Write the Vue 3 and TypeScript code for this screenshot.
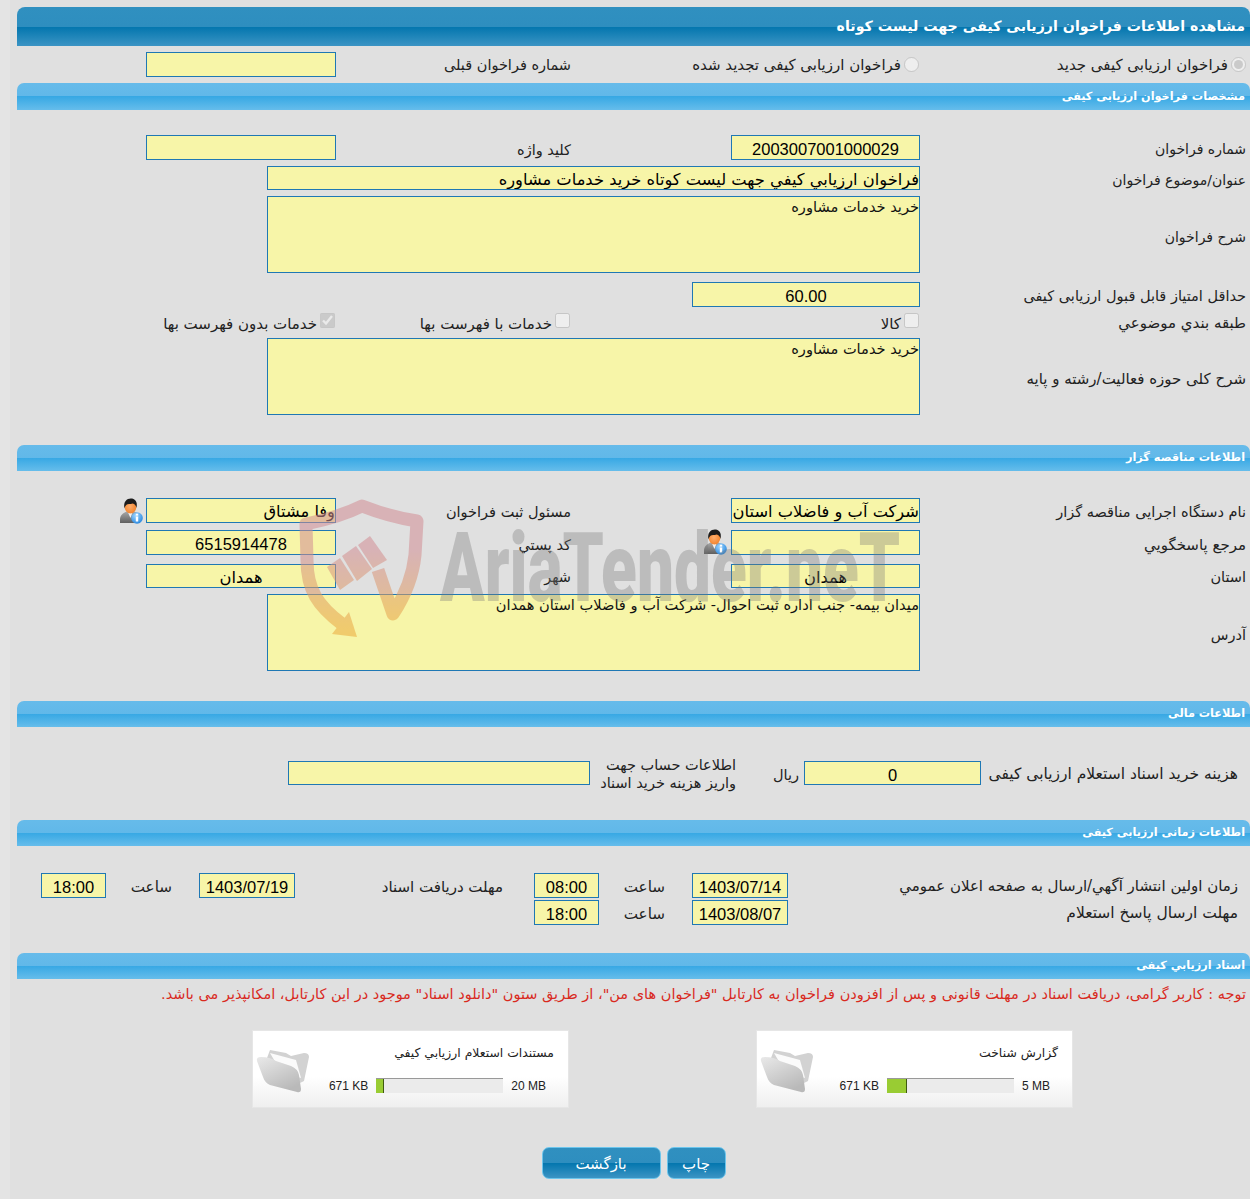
<script setup lang="ts">
interface DocCard { title: string; used: string; total: string; percent: number }
const cards: DocCard[] = [
  { title: 'گزارش شناخت', used: '671 KB', total: '5 MB', percent: 16 },
  { title: 'مستندات استعلام ارزيابي كيفي', used: '671 KB', total: '20 MB', percent: 6 },
]
</script>

<template>
  <div class="page" dir="rtl">
    <h1 class="title-bar">مشاهده اطلاعات فراخوان ارزیابی کیفی جهت لیست کوتاه</h1>

    <div class="grid radios">
      <label class="lab choice s15"><input type="radio" checked disabled />فراخوان ارزیابی کیفی جدید</label>
      <label class="choice c2 s15 nudge"><input type="radio" disabled />فراخوان ارزیابی کیفی تجدید شده</label>
      <div class="lab2 c4 prev-lab">شماره فراخوان قبلی</div>
      <div class="field c56 prev"></div>
    </div>

    <h2 class="sub-bar first-bar">مشخصات فراخوان ارزیابی کیفی</h2>
    <div class="grid spec">
      <div class="lab tight s14">شماره فراخوان</div>
      <div class="field c2 num">2003007001000029</div>
      <div class="lab2 c4">کلید واژه</div>
      <div class="field c56"></div>

      <div class="lab tight s14">عنوان/موضوع فراخوان</div>
      <div class="field wide strong h24">فراخوان ارزيابي كيفي جهت ليست كوتاه خريد خدمات مشاوره</div>

      <div class="lab s14">شرح فراخوان</div>
      <div class="field wide area">خرید خدمات مشاوره</div>

      <div class="lab">حداقل امتیاز قابل قبول ارزیابی کیفی</div>
      <div class="field mid num">60.00</div>

      <div class="lab tick-lab s15">طبقه بندي موضوعي</div>
      <label class="choice tick c2 nudge s15"><input type="checkbox" disabled />کالا</label>
      <label class="choice tick c4 nudge s15"><input type="checkbox" disabled />خدمات با فهرست بها</label>
      <label class="choice tick c567 nudge s15"><input type="checkbox" checked disabled />خدمات بدون فهرست بها</label>

      <div class="lab s15">شرح کلی حوزه فعالیت/رشته و پایه</div>
      <div class="field wide area">خرید خدمات مشاوره</div>
    </div>

    <h2 class="sub-bar tender-bar">اطلاعات مناقصه گزار</h2>
    <div class="grid tender">
      <div class="lab tight">نام دستگاه اجرایی مناقصه گزار</div>
      <div class="field c2 strong clip">شرکت آب و فاضلاب استان</div>
      <div class="lab2 c4 tight2">مسئول ثبت فراخوان</div>
      <div class="field c56 strong">وفا مشتاق</div>
      <svg class="user" viewBox="0 0 24 26" aria-hidden="true">
        <use href="#user-icon" />
      </svg>

      <div class="lab s15">مرجع پاسخگويي</div>
      <div class="field c2"></div>
      <svg class="user c3" viewBox="0 0 24 26" aria-hidden="true">
        <defs>
          <radialGradient id="face" cx=".45" cy=".45" r=".7">
            <stop offset="0" stop-color="#ffae6c" />
            <stop offset="1" stop-color="#ee7a20" />
          </radialGradient>
          <linearGradient id="suit" x1="0" y1="0" x2="0" y2="1">
            <stop offset="0" stop-color="#a8a8a8" />
            <stop offset="1" stop-color="#5f5f5f" />
          </linearGradient>
          <radialGradient id="info" cx=".4" cy=".3" r=".8">
            <stop offset="0" stop-color="#9fd6ff" />
            <stop offset="1" stop-color="#1b7fdc" />
          </radialGradient>
          <g id="user-icon">
            <path d="M1 25v-3c0-5 3-7 7-8.500l4 2 3-2c4 1 6 3.500 6 8v3.500z" fill="url(#suit)" />
            <path d="M9 14.500 11.500 20l2-5.500z" fill="#f2f2f2" />
            <ellipse cx="11.500" cy="9" rx="5.800" ry="6.500" fill="url(#face)" />
            <path d="M5.500 10.500C4 3.500 8 .5 11.800.5s7.200 2.500 5.700 9.500c-.5-2.500-1.800-4.200-3.800-4.500-2.700.8-5 .3-6.200 1.200-1 .8-1.500 2-2 3.800z" fill="#1c1c1c" />
            <circle cx="18" cy="20" r="5.800" fill="url(#info)" />
            <rect x="16.800" y="18.500" width="2.400" height="5" fill="#fff" />
            <rect x="16.800" y="15.700" width="2.400" height="1.900" fill="#fff" />
          </g>
        </defs>
        <use href="#user-icon" />
      </svg>
      <div class="lab2 c4">كد پستي</div>
      <div class="field c56 num">6515914478</div>

      <div class="lab">استان</div>
      <div class="field c2 h24 center strong">همدان</div>
      <div class="lab2 c4">شهر</div>
      <div class="field c56 h24 center strong">همدان</div>

      <div class="lab">آدرس</div>
      <div class="field wide area">میدان بیمه- جنب اداره ثبت احوال- شرکت آب و فاضلاب استان همدان</div>
    </div>

    <h2 class="sub-bar finance-bar">اطلاعات مالی</h2>
    <div class="finance">
      <div class="fin-lab">هزینه خرید اسناد استعلام ارزیابی کیفی</div>
      <div class="field num h24">0</div>
      <div class="rial">ريال</div>
      <div class="account">اطلاعات حساب جهت<br />واریز هزینه خرید اسناد</div>
      <div class="field h24"></div>
    </div>

    <h2 class="sub-bar time-bar">اطلاعات زمانی ارزیابی کیفی</h2>
    <div class="times">
      <div class="fin-lab s15">زمان اولین انتشار آگهي/ارسال به صفحه اعلان عمومي</div>
      <div class="field num">1403/07/14</div>
      <div class="hour">ساعت</div>
      <div class="field num">08:00</div>
      <div class="deadline">مهلت دریافت اسناد</div>
      <div class="field num">1403/07/19</div>
      <div class="hour">ساعت</div>
      <div class="field num">18:00</div>

      <div class="fin-lab">مهلت ارسال پاسخ استعلام</div>
      <div class="field num">1403/08/07</div>
      <div class="hour">ساعت</div>
      <div class="field num">18:00</div>
    </div>

    <h2 class="sub-bar docs-bar">اسناد ارزیابي کیفی</h2>
    <p class="note">توجه : کاربر گرامی، دریافت اسناد در مهلت قانونی و پس از افزودن فراخوان به کارتابل "فراخوان های من"، از طریق ستون "دانلود اسناد" موجود در این کارتابل، امکانپذیر می باشد.</p>

    <div class="cards">
      <div v-for="card in cards" :key="card.title" class="card">
        <div class="card-main">
          <div class="card-title">{{ card.title }}</div>
          <div class="card-row">
            <bdi class="size">{{ card.total }}</bdi>
            <div class="bar"><div class="bar-fill" :style="{ width: card.percent + '%' }"></div></div>
            <bdi class="size">{{ card.used }}</bdi>
          </div>
        </div>
        <svg class="folder" viewBox="0 0 54 46" aria-hidden="true">
          <defs>
            <linearGradient id="flap" x1="0" y1="0" x2=".6" y2="1">
              <stop offset="0" stop-color="#e9e9e9" />
              <stop offset="1" stop-color="#b9b9b9" />
            </linearGradient>
          </defs>
          <path d="M11 11 14 3l16 3 5 3 13-3q5 0 5 4l-5 24-10 5z" fill="#d2d2d2" />
          <path d="M14 6 40 13l5 18-20-6z" fill="#fbfbfb" />
          <path d="M1 14q-1-4 4-4 9 0 15 4l15 5q7 3 8 9l2 14q0 4-4 3L14 38q-5-2-7-8z" fill="url(#flap)" />
        </svg>
      </div>
    </div>

    <div class="actions">
      <button class="btn print" type="button">چاپ</button>
      <button class="btn back" type="button">بازگشت</button>
    </div>

    <div class="watermark" aria-hidden="true">
      <svg class="shield" viewBox="295 495 135 145">
        <defs>
          <linearGradient id="shieldFill" gradientUnits="userSpaceOnUse" x1="0" y1="550" x2="0" y2="632">
            <stop offset="0" stop-color="#d28e94" />
            <stop offset="1" stop-color="#ecaa3c" />
          </linearGradient>
        </defs>
        <g fill="none" stroke="url(#shieldFill)" stroke-width="13" stroke-linejoin="round">
          <path d="M342 624C318 606 307 590 307 560L306 524Q340 517 362 506Q390 517 417 521L415 555Q412 585 393 614L378 570" />
        </g>
        <g fill="url(#shieldFill)">
          <path d="M349 612 357 637 332 634z" />
          <path d="M327 567 340 558 354 580 340 590z" />
          <path d="M342 556 356 546 372 569 357 581z" />
          <path d="M358 545 370 536 387 560 373 568z" />
        </g>
      </svg>
      <div class="mark-text" dir="ltr">AriaTender.neT</div>
    </div>
  </div>
</template>

<style>
html, body { margin: 0; background: #e0e0e0; }
</style>

<style scoped>
.page {
  position: relative;
  box-sizing: border-box;
  height: 1199px;
  overflow: hidden;
  padding: 7px 0 0 17px;
  background: linear-gradient(90deg, #e4e4e4 10px, #e0e0e0 10px);
  font: 14.500px "DejaVu Sans", sans-serif;
  color: #222;
}
.title-bar {
  margin: 0;
  height: 39px;
  box-sizing: border-box;
  padding: 0 5px 0 0;
  line-height: 38px;
  border-radius: 8px 8px 0 0;
  background: linear-gradient(#3090c0 0, #2e8ebf 51%, #0376ae 51%, #3b94c4 100%);
  color: #fff;
  font-size: 14.200px;
  font-weight: 700;
}
.sub-bar {
  margin: 0;
  height: 26px;
  box-sizing: border-box;
  padding: 0 5px 0 0;
  line-height: 26px;
  border-radius: 7px 7px 0 0;
  background: linear-gradient(#66bbea 0, #61b8e9 50%, #37a8e4 50%, #66bdeb 100%);
  color: #fff;
  font-size: 11.250px;
  font-weight: 700;
}
.first-bar { height: 27px; line-height: 27px; }
.grid {
  display: grid;
  grid-template-columns: 330px 189px 160px 235px 69px 121px 129px;
  row-gap: 6px;
}
.radios { height: 37px; align-items: center; }
.spec {
  grid-template-rows: 25px 24px 77px 28px 19px 77px;
  padding-top: 25px;
}
.tender {
  grid-template-rows: 25px 26px 27px 77px;
  padding-top: 27px;
}
.tender-bar { margin-top: 30px; }
.finance-bar { margin-top: 30px; }
.time-bar { margin-top: 35px; }
.docs-bar { margin-top: 28px; }

.lab {
  grid-column: 1;
  padding-right: 4px;
  padding-top: 5px;
  white-space: nowrap;
  align-self: center;
}
.lab.tight { padding-top: 3px; }
.lab2 { white-space: nowrap; padding-top: 5px; align-self: center; }
.lab2.tight2 { padding-top: 2px; }
.lab2.prev-lab { padding-top: 0; }
.s14 { font-size: 14px; }
.s15 { font-size: 15px; }
.c2 { grid-column: 2; }
.c3 { grid-column: 3; }
.c4 { grid-column: 4; }
.c56 { grid-column: 5 / 7; }
.c567 { grid-column: 5 / 8; }
.wide { grid-column: 2 / 6; }
.mid { grid-column: 2 / 4; width: 228px; }

.field {
  box-sizing: border-box;
  height: 25px;
  align-self: end;
  background: #f7f5a8;
  border: 1px solid #1f78b4;
  color: #000;
  font-size: 14px;
  line-height: 23px;
  white-space: nowrap;
  overflow: hidden;
}
.prev { align-self: center; }
.h24 { height: 24px; line-height: 22px; }
.area { height: 77px; white-space: normal; line-height: 20px; font-size: 14.600px; color: #111; }
.strong { font-size: 16.300px; line-height: 25px; }
.center { text-align: center; }
.num {
  text-align: center;
  font-family: "Liberation Sans", sans-serif;
  font-size: 16.500px;
  line-height: 26px;
}

.choice {
  display: flex;
  align-items: center;
  white-space: nowrap;
}
.choice input {
  width: 15px;
  height: 15px;
  margin: 0 0 0 3px;
  flex: none;
}
.choice.lab { padding-top: 0; }
.nudge { margin-right: 1px; }
.tick { align-items: flex-start; line-height: 23px; align-self: start; }
.tick-lab { align-self: start; padding-top: 1px; }

.user { width: 24px; height: 26px; margin-right: 3px; align-self: center; }
.c3.user { margin-right: 4px; justify-self: start; }

.finance {
  display: grid;
  grid-template-columns: 269px 177px 68px 146px 302px;
  grid-template-rows: 24px;
  padding-top: 34px;
  align-items: center;
}
.fin-lab {
  padding-right: 12px;
  padding-top: 1px;
  font-size: 15.500px;
  white-space: nowrap;
  align-self: center;
}
.fin-lab.s15 { font-size: 15px; }
.rial { padding-right: 5px; padding-top: 3px; }
.account { padding-top: 2px; line-height: 18px; white-space: nowrap; }

.times {
  display: grid;
  grid-template-columns: 462px 96px 93px 65px 239px 96px 93px 65px;
  row-gap: 2px;
  padding-top: 27px;
}
.hour { padding-right: 27px; padding-top: 3px; align-self: center; font-size: 15.200px; }
.deadline { padding-right: 31px; padding-top: 3px; align-self: center; white-space: nowrap; font-size: 15px; }

.note {
  margin: 5px 0 0;
  height: 20px;
  line-height: 20px;
  padding-right: 4px;
  color: #d92a1e;
  font-size: 14.500px;
  white-space: nowrap;
}
.cards {
  display: flex;
  gap: 187px;
  margin-top: 26px;
  padding-right: 177px;
}
.card {
  box-sizing: border-box;
  display: flex;
  justify-content: space-between;
  width: 317px;
  height: 78px;
  border: 1px solid #e6e6e6;
  background: linear-gradient(#fff 60%, #efefef 100%);
}
.card-main {
  box-sizing: border-box;
  padding: 14px 14px 0 0;
  color: #222;
}
.card-title { font-size: 12.400px; line-height: 16px; white-space: nowrap; }
.card-row {
  display: flex;
  align-items: center;
  gap: 8px;
  margin-top: 16px;
  padding-right: 8px;
}
.size {
  font: 12px "Liberation Sans", sans-serif;
  white-space: nowrap;
  padding-top: 2px;
}
.bar {
  direction: ltr;
  width: 127px;
  height: 15px;
  box-sizing: border-box;
  border-top: 1px solid #999;
  background: #ebebeb;
}
.bar-fill {
  height: 100%;
  box-sizing: border-box;
  background: #9c3;
  border-right: 1px solid #3f5a10;
}
.folder { width: 54px; height: 46px; margin: 16px 0 0 3px; flex: none; }

.actions {
  display: flex;
  justify-content: center;
  gap: 6px;
  margin-top: 39px;
}
.btn {
  box-sizing: border-box;
  height: 32px;
  border: 1px solid #6cc5ec;
  border-radius: 7px;
  background: linear-gradient(#3090c0 0, #2e8ebf 50%, #0376ae 50%, #3b94c4 100%);
  color: #fff;
  font: 15px "DejaVu Sans", sans-serif;
  padding: 2px 0 0;
}
.print { width: 59px; }
.back { width: 119px; }

.watermark {
  position: absolute;
  inset: 0;
  pointer-events: none;
}
.shield {
  position: absolute;
  left: 295px;
  top: 495px;
  width: 135px;
  height: 145px;
  opacity: .55;
}
.mark-text {
  position: absolute;
  left: 440px;
  top: 513px;
  font: 900 96px/110px Roboto, sans-serif;
  color: rgba(120, 120, 120, .34);
  transform: scaleX(.684);
  transform-origin: left top;
  white-space: nowrap;
}
</style>
